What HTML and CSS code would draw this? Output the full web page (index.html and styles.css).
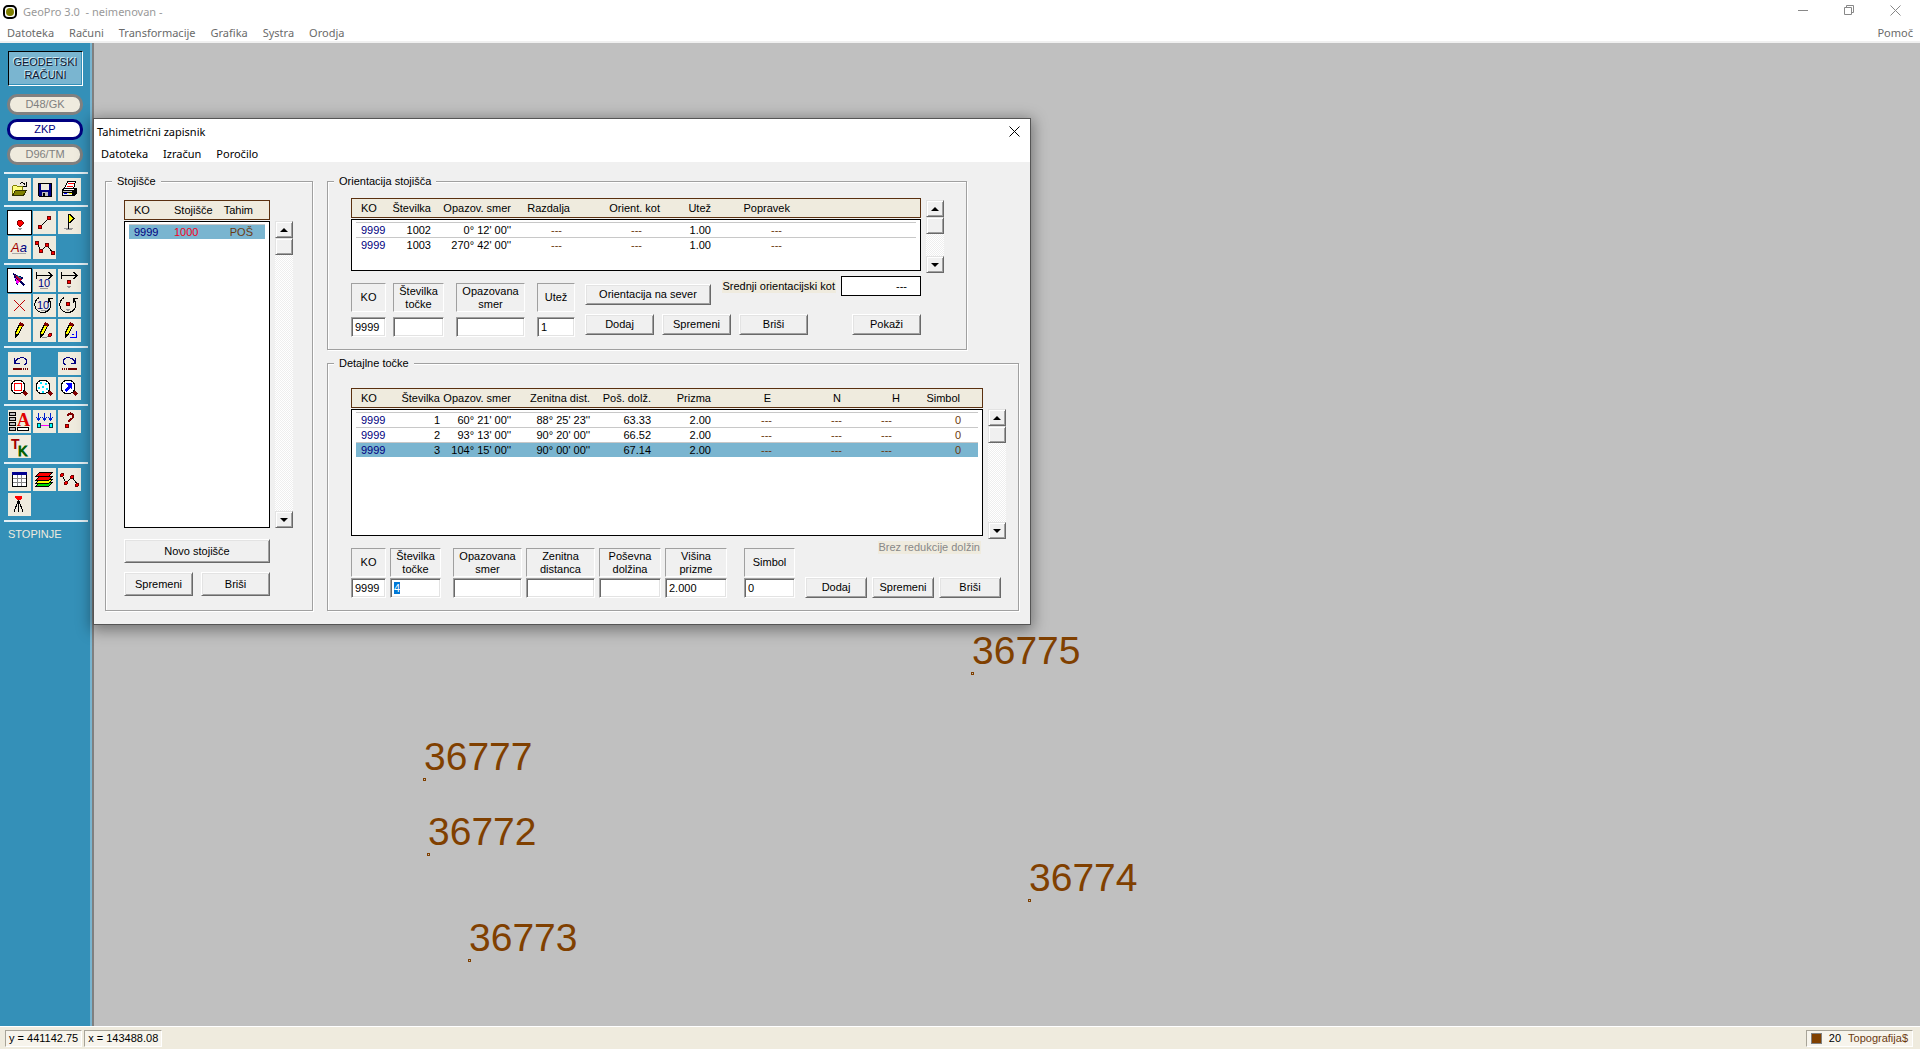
FILE: index.html
```html
<!DOCTYPE html>
<html lang="sl">
<head>
  <meta charset="UTF-8">
  <meta name="viewport" content="width=device-width, initial-scale=1.0">
  <title>GeoPro 3.0</title>
  <link rel="stylesheet" href="styles.css">
</head>
<body>
  <header class="titlebar">
    <svg class="app-icon" width="14" height="14" viewBox="0 0 14 14">
      <rect x="1" y="1" width="12" height="12" rx="4" fill="#fff" stroke="#000" stroke-width="2"/>
      <circle cx="7" cy="7" r="4" fill="#808000"/>
    </svg>
    <h1>GeoPro 3.0 &nbsp;- neimenovan -</h1>
    <div class="window-controls">
      <button aria-label="Pomanjšaj"><svg width="11" height="11" viewBox="0 0 11 11"><path d="M0 5.500h10"/></svg></button>
      <button aria-label="Obnovi"><svg width="11" height="11" viewBox="0 0 11 11"><path d="M.5 2.500h7v7h-7zM2.500 2.500v-2h7v7h-2"/></svg></button>
      <button aria-label="Zapri"><svg width="11" height="11" viewBox="0 0 11 11"><path d="M.5.500l10 10M10.500.500l-10 10"/></svg></button>
    </div>
  </header>

  <nav class="menubar">
    <a href="#">Datoteka</a>
    <a href="#">Računi</a>
    <a href="#">Transformacije</a>
    <a href="#">Grafika</a>
    <a href="#">Systra</a>
    <a href="#">Orodja</a>
    <a href="#" class="menu-right">Pomoč</a>
  </nav>

  <div class="workspace">
    <aside class="sidebar">
      <button class="mode">GEODETSKI<br>RAČUNI</button>
      <div class="systems">
        <button class="pill">D48/GK</button>
        <button class="pill active">ZKP</button>
        <button class="pill">D96/TM</button>
      </div>

      <!-- File -->
      <div class="tools">
        <button class="tool" aria-label="Odpri"><svg viewBox="0 0 23 23"><path d="M4.500 17.500v-9l1-1h3l1 1h5v4" fill="#ffff80" stroke="#808000"/><path d="M4.500 17.500l3-5h11l-3 5z" fill="#808000" stroke="#303000"/><path d="M12 6c1-2 4-2 5 1M18.500 4v4h-4" fill="none" stroke="#000"/></svg></button>
        <button class="tool" aria-label="Shrani"><svg viewBox="0 0 23 23"><path d="M5.500 5.500h13v13h-12l-1-1z" fill="#000080" stroke="#000"/><path d="M8 6h8v6h-8z" fill="#efebde"/><path d="M9 14h6v4h-6z" fill="#c0c0c0"/><path d="M10 15h2v3h-2z" fill="#000"/></svg></button>
        <button class="tool" aria-label="Tiskaj"><svg viewBox="0 0 23 23"><path d="M9.500 3.500h8l-2 7h-9z" fill="#fff" stroke="#000"/><path d="M10 5h6v1h-6zM9 8h6v1h-6z" fill="#f00"/><path d="M5 10h13l1 1v4l-3 3h-12v-6z" fill="#000"/><path d="M6 11h10l-1 1h-10z" fill="#fff"/><path d="M5 13h9v1h-9z" fill="#c0c0c0"/><path d="M5 15h9v2h-9z" fill="#e8e8e8"/><path d="M11 15h3v1h-3z" fill="#ff0"/><path d="M6 15h3v1h-3z" fill="#00f"/></svg></button>
      </div>

      <!-- Drawing -->
      <div class="tools">
        <button class="tool active" aria-label="Točka"><svg viewBox="0 0 23 23"><path d="M11 9h2l2 2v2l-2 2h-2l-2-2v-2z" fill="#f00" stroke="#800000"/><path d="M10 17.500h4M11 18.500h2" stroke="#999"/></svg></button>
        <button class="tool" aria-label="Linija"><svg viewBox="0 0 23 23"><path d="M7 16l9-9" stroke="#000"/><circle cx="7" cy="16" r="2"/><circle cx="16" cy="7" r="2"/></svg></button>
        <button class="tool" aria-label="Zastavica"><svg viewBox="0 0 23 23"><path d="M6 17.500h9M8 18.500h6" stroke="#999"/><path d="M10 3h1v15h-1z" fill="#000"/><path d="M10 3h2l5 4-5 5h-2z" fill="#000"/><path d="M11 4l4 3-4 4z" fill="#ff0"/></svg></button>
        <button class="tool" aria-label="Besedilo"><svg viewBox="0 0 23 23"><text x="3" y="16" class="glyph-aa" fill="#a00000">A<tspan fill="#000080">a</tspan></text><path d="M4 17.500h14" stroke="#aaa"/></svg></button>
        <button class="tool" aria-label="Lomljenka"><svg viewBox="0 0 23 23"><path d="M4 7l4 8 6-6 6 8" fill="none" stroke="#000"/><circle cx="4" cy="7" r="2"/><circle cx="8" cy="15" r="2"/><circle cx="14" cy="9" r="2"/><circle cx="20" cy="17" r="2"/></svg></button>
      </div>

      <!-- Editing -->
      <div class="tools">
        <button class="tool active" aria-label="Izberi"><svg viewBox="0 0 23 23"><path d="M5 4l11 5-3 2 4 5-2 1-4-4-2 4z" fill="#000060"/><path d="M7 8l4 5-2 3z" fill="#f0f"/><path d="M7 6l7 4-3 3z" fill="#b00030"/><path d="M9 6l5 3h-3z" fill="#00a0a0"/></svg></button>
        <button class="tool" aria-label="Razdalja"><svg viewBox="0 0 23 23"><path d="M3.500 3v7M4 6.500h15M15.500 3l3.500 3.500-3.500 3.500" fill="none" stroke="#000"/><text x="5" y="18" class="glyph-10">10</text><path d="M7 19.500h8" stroke="#999"/></svg></button>
        <button class="tool" aria-label="Premik"><svg viewBox="0 0 23 23"><path d="M3.500 3v7M4 6.500h15M15.500 3l3.500 3.500-3.500 3.500" fill="none" stroke="#000"/><circle cx="11" cy="13" r="2"/><path d="M9 17.500h4M10 18.500h2" stroke="#999"/></svg></button>
        <button class="tool" aria-label="Briši"><svg viewBox="0 0 23 23"><path d="M6 6l11 11M17 6l-11 11" stroke="#c00000"/></svg></button>
        <button class="tool" aria-label="Kot"><svg viewBox="0 0 23 23"><path d="M6 3.500a8 8 0 1 0 10 2M15.500 9v-5h4" fill="none" stroke="#000"/><text x="4" y="15" class="glyph-10">10</text><path d="M8 16.500h6" stroke="#999"/></svg></button>
        <button class="tool" aria-label="Zasuk"><svg viewBox="0 0 23 23"><path d="M6 3.500a8 8 0 1 0 10 2M15.500 9v-5h4" fill="none" stroke="#000"/><circle cx="10" cy="10" r="2"/><path d="M8 15.500h4M9 16.500h2" stroke="#999"/></svg></button>
        <button class="tool" aria-label="Svinčnik"><svg viewBox="0 0 23 23"><path d="M12 4.500l3 2-5 9-3 3v-4z" fill="#ff0" stroke="#000"/><path d="M12 3l4 2-1 3-4-2z" fill="#800000"/><path d="M7 15v4l3-3z" fill="#000"/></svg></button>
        <button class="tool" aria-label="Uredi točko"><svg viewBox="0 0 23 23"><path d="M12 4.500l3 2-5 9-3 3v-4z" fill="#ff0" stroke="#000"/><path d="M12 3l4 2-1 3-4-2z" fill="#800000"/><path d="M7 15v4l3-3z" fill="#000"/><path d="M9 18.500h4l4-2" fill="none" stroke="#888"/><circle cx="17" cy="16" r="1.500"/></svg></button>
        <button class="tool" aria-label="Uredi kot"><svg viewBox="0 0 23 23"><path d="M12 4.500l3 2-5 9-3 3v-4z" fill="#ff0" stroke="#000"/><path d="M12 3l4 2-1 3-4-2z" fill="#800000"/><path d="M7 15v4l3-3z" fill="#000"/><path d="M12 18.500h6.500v-7M14 15.500h2" fill="none" stroke="#00f"/></svg></button>
      </div>

      <!-- Undo and zoom -->
      <div class="tools">
        <button class="tool" aria-label="Razveljavi"><svg viewBox="0 0 23 23"><path d="M7 11c1-6 10-7 12-2 0 2-1 3-3 4M6.500 6v5.500h5" fill="none" stroke="#000080"/><path d="M5 17h9M15 17h1M17 17h1M19 17h1" stroke="#700000" stroke-width="2"/></svg></button>
        <button class="tool tool-right" aria-label="Uveljavi"><svg viewBox="0 0 23 23"><path d="M17 11c-1-6-10-7-12-2 0 2 1 3 3 4M17.500 6v5.500h-5" fill="none" stroke="#000080"/><path d="M10 17h9M8 17h1M6 17h1M4 17h1" stroke="#700000" stroke-width="2"/></svg></button>
        <button class="tool" aria-label="Povečaj okno"><svg viewBox="0 0 23 23"><path d="M15 14l4 4" class="handle"/><circle cx="10" cy="10" r="7" class="lens"/><path d="M6.500 6.500h7v7h-7z" fill="none" stroke="#f00"/></svg></button>
        <button class="tool" aria-label="Povečaj vse"><svg viewBox="0 0 23 23"><path d="M15 14l4 4" class="handle"/><circle cx="10" cy="10" r="7" class="lens"/><path d="M7 5h2v2h-2zM12 6h2v2h-2zM5 10h2v2h-2zM9 9h2v2h-2zM13 11h2v2h-2zM9 14h2v2h-2z" fill="#00e5ff"/></svg></button>
        <button class="tool" aria-label="Povečaj smer"><svg viewBox="0 0 23 23"><path d="M15 14l4 4" class="handle"/><circle cx="10" cy="10" r="7" class="lens"/><path d="M7 6h7v7l-2-2-4 4-2-2 4-4z" fill="#00f"/></svg></button>
      </div>

      <!-- Attributes -->
      <div class="tools">
        <button class="tool" aria-label="Atributi"><svg viewBox="0 0 23 23"><path d="M1.500 2.500h6v3h-6zM1.500 7.500h6v3h-6zM1.500 12.500h6v3h-6zM1.500 17.500h6v3h-6z" fill="#c0c0c0" stroke="#000"/><text x="9" y="16" class="glyph-a">A</text><path d="M9.500 17.500h11v3h-11z" fill="#fff" stroke="#000"/></svg></button>
        <button class="tool" aria-label="Projekcija"><svg viewBox="0 0 23 23"><path d="M5.500 3v7M3 7l2.500 3 2.500-3M11.500 3v7M9 7l2.500 3 2.500-3M17.500 3v7M15 7l2.500 3 2.500-3" fill="none" stroke="#0020d0"/><path d="M7 15.500h9" stroke="#f0f"/><path d="M4 13.500h3v4h-3zM16 13.500h3v4h-3z" fill="#0ff" stroke="#004040"/></svg></button>
        <button class="tool" aria-label="Poizvedba"><svg viewBox="0 0 23 23"><path d="M10 6c1-4 6-3 5 1-1 3-4 2-4 5" fill="none" stroke="#800000" stroke-width="2"/><circle cx="9" cy="16" r="2"/></svg></button>
        <button class="tool" aria-label="Topografski ključ"><svg viewBox="0 0 23 23"><text x="3" y="14" class="glyph-t">T</text><text x="10" y="21" class="glyph-k">K</text></svg></button>
      </div>

      <!-- Views -->
      <div class="tools">
        <button class="tool" aria-label="Tabela"><svg viewBox="0 0 23 23"><path d="M4.500 5.500h14v13h-14z" fill="#fff" stroke="#000"/><path d="M4 4h15v3h-15z" fill="#000090"/><path d="M5 10.500h13M5 14.500h13M9.500 7v11M13.500 7v11" stroke="#888"/></svg></button>
        <button class="tool" aria-label="Sloji"><svg viewBox="0 0 23 23"><path d="M2.500 18.500l4-4h13l-4 4z" fill="#0d0" stroke="#000"/><path d="M2.500 15.500l4-4h13l-4 4z" fill="#ff0" stroke="#000"/><path d="M2.500 12.500l4-4h13l-4 4z" fill="#f00" stroke="#000"/><path d="M2.500 8.500l4-4h13l-4 4z" fill="#f00" stroke="#000"/></svg></button>
        <button class="tool" aria-label="Poligon"><svg viewBox="0 0 23 23"><path d="M4 7l4 8 6-6 6 8" fill="none" stroke="#000"/><circle cx="4" cy="7" r="1.500"/><circle cx="8" cy="15" r="1.500"/><circle cx="14" cy="9" r="1.500"/><circle cx="19" cy="17" r="1.500"/></svg></button>
        <button class="tool" aria-label="Tahimetrija"><svg viewBox="0 0 23 23"><path d="M10.500 6v13M10 8l-4 11M11 8l4 11" fill="none" stroke="#000"/><path d="M7 3h7v2l-2 2h-3l-2-2z" fill="#f00"/></svg></button>
      </div>
      <div class="unit">STOPINJE</div>
    </aside>

    <main class="canvas">
      <div class="point p36775"><span>36775</span></div>
      <div class="point p36777"><span>36777</span></div>
      <div class="point p36772"><span>36772</span></div>
      <div class="point p36774"><span>36774</span></div>
      <div class="point p36773"><span>36773</span></div>

      <section class="dialog">
        <div class="dialog-title">
          <h2>Tahimetrični zapisnik</h2>
          <button aria-label="Zapri okno"><svg width="11" height="11" viewBox="0 0 11 11"><path d="M.5.500l10 10M10.500.500l-10 10"/></svg></button>
        </div>
        <nav class="dialog-menu">
          <a href="#">Datoteka</a>
          <a href="#">Izračun</a>
          <a href="#">Poročilo</a>
        </nav>

        <div class="dialog-body">
          <fieldset class="group stations">
            <legend>Stojišče</legend>
            <div class="list-row">
              <table class="list list-stations">
                <thead>
                  <tr><th>KO</th><th>Stojišče</th><th>Tahim</th></tr>
                </thead>
                <tbody>
                  <tr class="selected"><td class="ko">9999</td><td class="station">1000</td><td class="brown">POŠ</td></tr>
                </tbody>
              </table>
              <div class="scroll">
                <button class="up" aria-label="Gor"></button>
                <div class="thumb"></div>
                <button class="down" aria-label="Dol"></button>
              </div>
            </div>
            <div class="station-actions">
              <button class="btn wide">Novo stojišče</button>
              <button class="btn">Spremeni</button>
              <button class="btn">Briši</button>
            </div>
          </fieldset>

          <div class="groups-right">
            <fieldset class="group orientation">
              <legend>Orientacija stojišča</legend>
              <div class="list-row">
                <table class="list list-orientation">
                  <thead>
                    <tr><th>KO</th><th>Številka</th><th>Opazov. smer</th><th>Razdalja</th><th>Orient. kot</th><th>Utež</th><th>Popravek</th></tr>
                  </thead>
                  <tbody>
                    <tr><td class="ko">9999</td><td>1002</td><td>0° 12' 00''</td><td class="brown">---</td><td class="brown">---</td><td>1.00</td><td class="brown">---</td></tr>
                    <tr><td class="ko">9999</td><td>1003</td><td>270° 42' 00''</td><td class="brown">---</td><td class="brown">---</td><td>1.00</td><td class="brown">---</td></tr>
                  </tbody>
                </table>
                <div class="scroll">
                  <button class="up" aria-label="Gor"></button>
                  <div class="thumb"></div>
                  <button class="down" aria-label="Dol"></button>
                </div>
              </div>
              <div class="form">
                <div class="fields">
                  <div class="field ko-field"><label for="o-ko">KO</label><input id="o-ko" type="text" value="9999"></div>
                  <div class="field number"><label for="o-num">Številka<br>točke</label><input id="o-num" type="text"></div>
                  <div class="field angle spaced"><label for="o-dir">Opazovana<br>smer</label><input id="o-dir" type="text"></div>
                  <div class="field weight spaced"><label for="o-weight">Utež</label><input id="o-weight" type="text" value="1"></div>
                </div>
                <div class="orientation-actions">
                  <div class="north">
                    <button class="btn">Orientacija na sever</button>
                    <label class="note" for="o-mean">Srednji orientacijski kot</label>
                    <output id="o-mean">---</output>
                  </div>
                  <div class="buttons">
                    <button class="btn">Dodaj</button>
                    <button class="btn">Spremeni</button>
                    <button class="btn">Briši</button>
                    <button class="btn push">Pokaži</button>
                  </div>
                </div>
              </div>
            </fieldset>

            <fieldset class="group details">
              <legend>Detajlne točke</legend>
              <div class="list-row">
                <table class="list list-details">
                  <thead>
                    <tr><th>KO</th><th>Številka</th><th>Opazov. smer</th><th>Zenitna dist.</th><th>Poš. dolž.</th><th>Prizma</th><th>E</th><th>N</th><th>H</th><th>Simbol</th></tr>
                  </thead>
                  <tbody>
                    <tr><td class="ko">9999</td><td>1</td><td>60° 21' 00''</td><td>88° 25' 23''</td><td>63.33</td><td>2.00</td><td class="brown">---</td><td class="brown">---</td><td class="brown">---</td><td class="brown">0</td></tr>
                    <tr><td class="ko">9999</td><td>2</td><td>93° 13' 00''</td><td>90° 20' 00''</td><td>66.52</td><td>2.00</td><td class="brown">---</td><td class="brown">---</td><td class="brown">---</td><td class="brown">0</td></tr>
                    <tr class="selected"><td class="ko">9999</td><td>3</td><td>104° 15' 00''</td><td>90° 00' 00''</td><td>67.14</td><td>2.00</td><td class="brown">---</td><td class="brown">---</td><td class="brown">---</td><td class="brown">0</td></tr>
                  </tbody>
                </table>
                <div class="scroll">
                  <button class="up" aria-label="Gor"></button>
                  <div class="thumb"></div>
                  <button class="down" aria-label="Dol"></button>
                </div>
              </div>
              <div class="form">
                <div class="fields">
                  <div class="field ko-field"><label for="d-ko">KO</label><input id="d-ko" type="text" value="9999"></div>
                  <div class="field number"><label for="d-num">Številka<br>točke</label><input id="d-num" type="text" value="4"></div>
                  <div class="field angle spaced"><label for="d-dir">Opazovana<br>smer</label><input id="d-dir" type="text"></div>
                  <div class="field angle"><label for="d-zenith">Zenitna<br>distanca</label><input id="d-zenith" type="text"></div>
                  <div class="field length"><label for="d-slope">Poševna<br>dolžina</label><input id="d-slope" type="text"></div>
                  <div class="field length"><label for="d-prism">Višina<br>prizme</label><input id="d-prism" type="text" value="2.000"></div>
                  <div class="field number symbol"><label for="d-symbol">Simbol</label><input id="d-symbol" type="text" value="0"></div>
                </div>
                <div class="detail-actions">
                  <span class="note muted">Brez redukcije dolžin</span>
                  <div class="buttons">
                    <button class="btn">Dodaj</button>
                    <button class="btn">Spremeni</button>
                    <button class="btn">Briši</button>
                  </div>
                </div>
              </div>
            </fieldset>
          </div>
        </div>
      </section>
    </main>
  </div>

  <footer class="statusbar">
    <div class="pane">y = 441142.75</div>
    <div class="pane">x = 143488.08</div>
    <div class="pane layer"><i class="swatch"></i>20 <span class="brown">Topografija$</span></div>
  </footer>

  <script src="main.js"></script>
</body>
</html>
```
FILE: main.js
```js
// the next point number is ready to be overwritten
const num = document.getElementById('d-num');
num.focus({ preventScroll: true });
num.select();
```
FILE: styles.css
```css
* {
  margin: 0;
  padding: 0;
  box-sizing: border-box;
}

body {
  height: 100vh;
  display: flex;
  flex-direction: column;
  font-family: "Liberation Sans", Arial, sans-serif;
  font-size: 11px;
  line-height: 13px;
  color: #000;
  background: #fff;
  overflow: hidden;
}

button, input {
  font: inherit;
  color: inherit;
}

a {
  color: inherit;
  text-decoration: none;
}

/* Main window */
.titlebar, .menubar, .dialog-title, .dialog-menu {
  display: flex;
  align-items: center;
  font-family: "Noto Sans", "Open Sans", sans-serif;
  font-size: 11px;
  line-height: 16px;
}

.titlebar {
  height: 23px;
  padding: 0 2px 0 3px;
  gap: 6px;
  color: #999;
}

.titlebar h1, .dialog h2 {
  font-size: 11px;
  font-weight: 400;
}

.window-controls {
  display: flex;
  margin-left: auto;
}

.window-controls button {
  width: 46px;
  height: 20px;
  border: 0;
  background: none;
}

.window-controls path {
  fill: none;
  stroke: #888;
}

.menubar {
  height: 20px;
  padding: 2px 7px 0;
  gap: 15px;
  color: #6a6a6a;
  border-bottom: 2px solid #f0f0f0;
}

.menu-right {
  margin-left: auto;
}

.workspace {
  flex: 1;
  display: flex;
  min-height: 0;
}

/* Sidebar */
.sidebar {
  width: 94px;
  padding: 8px 8px 0;
  background: #3490b8;
  border-right: 2px solid #808080;
  box-shadow: inset -2px 0 #7ab5d0;
}

.mode {
  width: 75px;
  height: 35px;
  background: #7ab5d0;
  border: 1px solid;
  border-color: #000 #fff #fff #000;
  box-shadow: inset -1px -1px #3490b8;
  color: #101830;
  text-shadow: -1px -1px #d8eef8;
}

.systems {
  display: flex;
  flex-direction: column;
  gap: 4px;
  margin: 8px -1px 7px;
}

.pill {
  width: 76px;
  height: 21px;
  border: 3px solid #808080;
  border-radius: 10px;
  background: #efebde;
  color: #808080;
}

.pill.active {
  border-color: #000080;
  background: #fff;
  color: #000080;
}

.tools {
  display: grid;
  grid-template-columns: repeat(3, 23px);
  gap: 2px;
  margin: 0 -4px;
  padding: 4px;
  border-top: 2px solid #e4f0f6;
}

.tool {
  width: 23px;
  height: 23px;
  border: 0;
  background: #efebde;
}

.tool.active {
  background: #fff;
  outline: 1px solid #000;
}

.tool-right {
  grid-column: 3;
}

.tool svg {
  display: block;
  shape-rendering: crispEdges;
}

.tool circle {
  fill: #f00;
  stroke: #700000;
}

.tool .lens {
  fill: #fff;
  stroke: #000;
}

.tool .handle {
  stroke: #800000;
  stroke-width: 3;
}

.tool text {
  font-family: "Liberation Sans", Arial, sans-serif;
}

.tool .glyph-aa {
  font-size: 13px;
  font-style: italic;
}

.tool .glyph-10 {
  font-size: 11px;
  fill: #000080;
}

.tool .glyph-a {
  font-family: "Liberation Serif", serif;
  font-size: 18px;
  font-weight: 700;
  fill: #e00000;
}

.tool .glyph-t {
  font-size: 14px;
  font-weight: 700;
  fill: #a00000;
}

.tool .glyph-k {
  font-size: 14px;
  fill: #006000;
  stroke: #006000;
}

.unit {
  margin: 0 -4px;
  padding: 6px 4px;
  border-top: 2px solid #e4f0f6;
  color: #efebde;
}

/* Drawing area */
.canvas {
  position: relative;
  flex: 1;
  background: #c0c0c0;
}

.point {
  position: absolute;
  width: 3px;
  height: 3px;
  border: 1px solid #804000;
}

.point span {
  position: absolute;
  left: 0;
  bottom: 2px;
  font-size: 39px;
  line-height: 42px;
  color: #804000;
}

.p36775 { left: 877px; top: 629px; }
.p36777 { left: 329px; top: 735px; }
.p36772 { left: 333px; top: 810px; }
.p36774 { left: 934px; top: 856px; }
.p36773 { left: 374px; top: 916px; }

/* Dialog */
.dialog {
  position: absolute;
  left: -1px;
  top: 75px;
  background: #f0f0f0;
  border: 1px solid #555;
  box-shadow: 0 3px 14px 2px rgba(0, 0, 0, 0.4);
}

.dialog-title {
  justify-content: space-between;
  height: 25px;
  padding: 0 10px 0 3px;
  background: #fff;
}

.dialog-title button {
  display: flex;
  border: 0;
  background: none;
}

.dialog-title path {
  fill: none;
  stroke: #000;
}

.dialog-menu {
  height: 18px;
  padding: 2px 7px 0;
  gap: 15px;
  background: #fff;
}

.dialog-body {
  display: flex;
  gap: 14px;
  padding: 13px 11px;
}

.groups-right {
  display: flex;
  flex-direction: column;
  align-items: flex-start;
  gap: 7px;
}

.group {
  border: 1px solid #a0a0a0;
  box-shadow: 1px 1px #fff, inset 1px 1px #fff;
}

.group legend {
  height: 13px;
  margin-left: -17px;
  padding: 0 5px;
  background: #f0f0f0;
}

.stations {
  width: 208px;
  padding: 12px 18px 14px;
}

.stations legend {
  margin-left: -12px;
}

.orientation {
  width: 640px;
  padding: 10px 21px 12px 23px;
}

.details {
  width: 692px;
  padding: 18px 12px 12px 23px;
}

/* Lists */
.list-row {
  display: flex;
  align-items: flex-end;
  gap: 5px;
}

.list, .list thead, .list tbody {
  display: block;
}

.list tr {
  display: grid;
}

.list thead {
  padding: 2px 4px;
  background: #efebde;
  border: 1px solid #5a3010;
}

.list tbody {
  margin-top: 1px;
  padding: 2px 4px;
  background: #fff;
  border: 1px solid #000;
}

.list th, .list td {
  font-weight: 400;
  line-height: 14px;
  text-align: right;
  white-space: nowrap;
}

.list tbody tr {
  border-top: 1px solid #c8c8c8;
}

.list th:first-child, .list td:first-child {
  padding-left: 5px;
  text-align: left;
}

.list .selected {
  background: #7ab5d0;
}

.ko {
  color: #000080;
}

.station {
  color: #f00020;
}

.brown {
  color: #6b3a10;
}

.list-stations { width: 146px; }
.list-stations tbody { height: 307px; }
.list-stations tr { grid-template-columns: 45px 36px 43px; }
.list-stations td:nth-child(2), .list-stations th:nth-child(2) { text-align: left; }

.list-orientation { width: 570px; }
.list-orientation tbody { height: 52px; }
.list-orientation thead tr { grid-template-columns: 35px 40px 80px 59px 90px 51px 79px; }
.list-orientation tbody tr { grid-template-columns: 35px 40px 80px 51px 80px 69px 71px; }

.list-details { width: 632px; }
.list-details tbody { height: 127px; }
.list-details thead tr { grid-template-columns: 35px 49px 71px 79px 61px 60px 60px 70px 59px 60px; }
.list-details tbody tr { grid-template-columns: 35px 49px 71px 79px 61px 60px 61px 70px 50px 69px; }

/* Scrollbars */
.scroll {
  display: flex;
  flex-direction: column;
  width: 18px;
  background: repeating-conic-gradient(#fff 0 25%, #eee 0 50%) 0 0 / 2px 2px;
}

.stations .scroll { height: 307px; }
.orientation .scroll { height: 73px; margin-bottom: -2px; }
.details .scroll { height: 130px; margin-bottom: -3px; }

.scroll button, .scroll .thumb {
  height: 17px;
  background: #f0f0f0;
  border: 1px solid;
  border-color: #e3e3e3 #696969 #696969 #e3e3e3;
  box-shadow: inset 1px 1px #fff, inset -1px -1px #a0a0a0;
}

.scroll button {
  display: flex;
  align-items: center;
  justify-content: center;
}

.scroll button::before {
  content: "";
  border: 4px solid transparent;
  border-top-width: 0;
  border-bottom: 4px solid #000;
}

.scroll .down {
  margin-top: auto;
}

.scroll .down::before {
  transform: rotate(180deg);
}

/* Buttons and fields */
.btn {
  height: 21px;
  background: #f0f0f0;
  border: 1px solid;
  border-color: #fff #696969 #696969 #fff;
  box-shadow: inset 1px 1px #e3e3e3, inset -1px -1px #a0a0a0;
  white-space: nowrap;
}

.station-actions {
  display: grid;
  grid-template-columns: 69px 69px;
  gap: 9px 8px;
  margin-top: 11px;
}

.station-actions .btn {
  height: 24px;
}

.station-actions .wide {
  grid-column: span 2;
}

.form {
  display: flex;
  gap: 10px;
  margin-top: 5px;
}

.fields {
  display: flex;
  gap: 4px;
  margin-top: 7px;
}

.orientation .fields {
  gap: 7px;
}

.field {
  display: flex;
  flex-direction: column;
  gap: 1px;
}

.orientation .field {
  gap: 5px;
}

.ko-field { width: 35px; }
.number { width: 51px; }
.angle { width: 69px; }
.length { width: 62px; }
.weight { width: 38px; }

.orientation .spaced { margin-left: 5px; }
.details .spaced { margin-left: 8px; }
.symbol { margin-left: 13px; }

.field label {
  display: flex;
  align-items: center;
  justify-content: center;
  height: 29px;
  text-align: center;
  border: 1px solid;
  border-color: #a0a0a0 #fff #fff #a0a0a0;
}

.field input {
  width: 100%;
  height: 20px;
  padding: 0 3px;
  background: #fff;
  border: 1px solid;
  border-color: #a0a0a0 #fff #fff #a0a0a0;
  box-shadow: inset 1px 1px #696969, inset -1px -1px #e3e3e3;
  outline: 0;
}

.field input::selection {
  background: #0078d7;
  color: #fff;
}

.buttons {
  display: flex;
}

.note {
  padding: 0 1px;
  background: #efebde;
  white-space: nowrap;
}

.muted {
  color: #888;
}

.orientation-actions {
  display: flex;
  flex-direction: column;
  gap: 9px;
  width: 336px;
}

.north {
  display: flex;
  align-items: flex-start;
}

.north .btn {
  width: 126px;
  margin-top: 8px;
}

.north .note {
  margin: 4px 5px 0 auto;
}

.north output {
  width: 80px;
  height: 20px;
  padding: 3px 13px;
  text-align: right;
  background: #fff;
  border: 1px solid #000;
}

.orientation-actions .buttons {
  gap: 8px;
}

.orientation-actions .buttons .btn {
  width: 69px;
}

.orientation-actions .buttons .push {
  margin-left: auto;
}

.detail-actions {
  display: flex;
  flex-direction: column;
  align-items: flex-start;
  justify-content: space-between;
}

.detail-actions .note {
  align-self: flex-end;
  margin-right: 20px;
}

.detail-actions .buttons {
  gap: 5px;
}

.detail-actions .btn {
  width: 62px;
}

/* Status bar */
.statusbar {
  display: flex;
  gap: 2px;
  height: 23px;
  padding: 3px 7px 2px 5px;
  background: #efebde;
  border-top: 1px solid #fff;
}

.pane {
  display: flex;
  align-items: center;
  padding: 0 3px;
  background: #f7f4ec;
  border: 1px solid;
  border-color: #a8a498 #fff #fff #a8a498;
}

.layer {
  gap: 7px;
  margin-left: auto;
  padding: 0 4px;
}

.swatch {
  width: 11px;
  height: 11px;
  background: #804000;
  border: 1px solid #808080;
}
```
